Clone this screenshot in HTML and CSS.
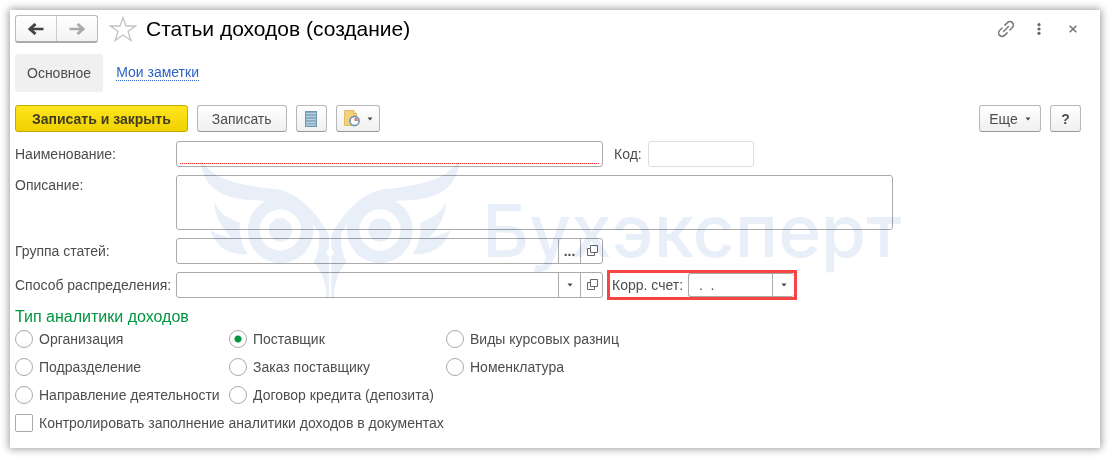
FILE: index.html
```html
<!DOCTYPE html>
<html lang="ru">
<head>
<meta charset="utf-8">
<title>Статьи доходов (создание)</title>
<link rel="stylesheet" href="styles.css">
</head>
<body>
<svg class="defs" aria-hidden="true">
  <symbol id="open" viewBox="0 0 12 12"><path d="M4.500.500h7v7h-7zM4.500 3.500h-3v7h7v-3" fill="none" stroke="#666"/></symbol>
  <symbol id="caret" viewBox="0 0 6 4"><path d="M.500.500h5L3 3.500z" fill="#444"/></symbol>
</svg>
<main class="window">
  <header class="titlebar">
    <div class="history">
      <button type="button" aria-label="Назад"><svg width="16" height="12" viewBox="0 0 16 12"><path d="M15.500 6H4" stroke="#444" stroke-width="2.500"/><path d="M7.500 1 2 6l5.500 5" fill="none" stroke="#444" stroke-width="3"/></svg></button>
      <button type="button" aria-label="Вперед"><svg width="16" height="12" viewBox="0 0 16 12"><path d="M.5 6H12" stroke="#aaa" stroke-width="2.500"/><path d="M8.500 1 14 6l-5.500 5" fill="none" stroke="#aaa" stroke-width="3"/></svg></button>
    </div>
    <button class="plain" type="button" aria-label="В избранное"><svg width="28" height="26" viewBox="0 0 28 26"><path d="M14 1.500 17 10h9.500l-7.500 5.500 3 9-8-5.500-8 5.500 3-9L1.500 10H11z" fill="#fff" stroke="#bfc3c8" stroke-width="1.300"/></svg></button>
    <h1>Статьи доходов (создание)</h1>
    <div class="window-actions">
      <button class="plain" type="button" aria-label="Ссылка"><svg width="18" height="18" viewBox="0 0 18 18"><g transform="rotate(-45 9 9)" fill="none" stroke="#777" stroke-width="1.500" stroke-linecap="round"><path d="M7 5.500H3.500a3.500 3.500 0 0 0 0 7H7M11 5.500h3.500a3.500 3.500 0 0 1 0 7H11M5.500 9h7"/></g></svg></button>
      <button class="plain" type="button" aria-label="Меню"><svg width="4" height="12" viewBox="0 0 4 12" fill="#666"><circle cx="2" cy="1.700" r="1.600"/><circle cx="2" cy="6" r="1.600"/><circle cx="2" cy="10.300" r="1.600"/></svg></button>
      <button class="plain close" type="button" aria-label="Закрыть"><svg width="8" height="8" viewBox="0 0 8 8"><path d="m.7.700 6.600 6.600M7.300.700.700 7.300" stroke="#777" stroke-width="1.600"/></svg></button>
    </div>
  </header>

  <nav class="tabs">
    <span class="tab">Основное</span>
    <a href="#notes">Мои заметки</a>
  </nav>

  <div class="toolbar">
    <button class="btn primary" type="button">Записать и закрыть</button>
    <button class="btn" type="button">Записать</button>
    <button class="btn icon" type="button" aria-label="Список"><svg width="12" height="16" viewBox="0 0 12 16"><path fill="#7fa3bd" d="M0 0h12v16H0z"/><path d="M1 2.500h10M1 5.500h10M1 8.500h10M1 11.500h10M1 14h10" stroke="#b4cfe0" stroke-width="1.500"/><path d="M.5.500h11v15H.5z" fill="none" stroke="#6f97b3"/></svg></button>
    <button class="btn drop" type="button" aria-label="Создать на основании"><svg width="18" height="17" viewBox="0 0 18 17"><path d="M1.500.500h9l3 3v12h-12z" fill="#f2d27a" stroke="#e0be68"/><path d="M10.500.500v3h3" fill="#fff2c4" stroke="#d9b55c"/><circle cx="11.500" cy="11" r="4.600" fill="#fff" stroke="#6f93b3" stroke-width="1.600"/><path d="M11.500 11V7.500a3.500 3.500 0 0 1 3.500 3.500z" fill="#ef7777"/></svg><svg width="6" height="4"><use href="#caret"/></svg></button>
    <button class="btn more" type="button">Еще <svg width="6" height="4"><use href="#caret"/></svg></button>
    <button class="btn icon help" type="button">?</button>
  </div>

  <form class="form">
    <label for="name">Наименование:</label>
    <div class="line">
      <div class="field wide required"><input id="name" type="text"></div>
      <label for="code">Код:</label>
      <div class="field code"><input id="code" type="text" readonly></div>
    </div>
    <label class="top" for="about">Описание:</label>
    <textarea id="about"></textarea>
    <label for="group">Группа статей:</label>
    <div class="line">
      <div class="field wide"><input id="group" type="text"><button class="dots" type="button">...</button><button type="button" aria-label="Открыть группу"><svg width="12" height="12"><use href="#open"/></svg></button></div>
    </div>
    <label for="method">Способ распределения:</label>
    <div class="line">
      <div class="field wide"><input id="method" type="text"><button type="button" aria-label="Выбрать способ"><svg width="6" height="4"><use href="#caret"/></svg></button><button type="button" aria-label="Открыть способ"><svg width="12" height="12"><use href="#open"/></svg></button></div>
      <div class="marked">
        <label for="account">Корр. счет:</label>
        <div class="field account"><input id="account" type="text" value=" .  ."><button type="button" aria-label="Выбрать счет"><svg width="6" height="4"><use href="#caret"/></svg></button></div>
      </div>
    </div>
  </form>

  <fieldset class="kinds">
    <legend>Тип аналитики доходов</legend>
    <div class="options">
      <label><input type="radio" name="kind">Организация</label>
      <label><input type="radio" name="kind" checked>Поставщик</label>
      <label><input type="radio" name="kind">Виды курсовых разниц</label>
      <label><input type="radio" name="kind">Подразделение</label>
      <label><input type="radio" name="kind">Заказ поставщику</label>
      <label><input type="radio" name="kind">Номенклатура</label>
      <label><input type="radio" name="kind">Направление деятельности</label>
      <label><input type="radio" name="kind">Договор кредита (депозита)</label>
    </div>
  </fieldset>
  <label class="check"><input type="checkbox">Контролировать заполнение аналитики доходов в документах</label>

  <div class="watermark">
    <svg width="260" height="140" viewBox="58 56 780 420">
      <defs>
        <g id="half">
          <path d="M60 58C100 122 190 137 290 147C355 160 410 218 445 285V326A12 12 0 0 0 445 348V473H438C436 430 425 395 399 364C412 345 417 315 416 279L397 252L398 269A98.500 98.500 0 1 1 255 182C200 178 150 180 110 152C80 132 62 100 60 58ZM299 207A62 62 0 1 0 299 331A62 62 0 1 0 299 207Z"/>
          <circle cx="299" cy="269" r="35"/>
          <path d="M101 185C118 222 145 235 178 247C174 282 183 315 202 342C145 346 105 320 88 270C110 283 130 289 153 293C120 260 102 225 101 185Z"/>
        </g>
      </defs>
      <use href="#half"/>
      <use href="#half" transform="translate(897 0) scale(-1 1)"/>
    </svg>
    <span>Бухэксперт</span>
  </div>
</main>
</body>
</html>
```
FILE: styles.css
```css
* { box-sizing: border-box; }

body {
  margin: 0;
  padding: 10px;
  background: #fff;
  color: #4d4d4d;
  font: 14px/20px "Liberation Sans", Arial, sans-serif;
}

button, input, textarea { font: inherit; color: inherit; }
button { padding: 0; display: flex; align-items: center; justify-content: center; }
.defs { position: absolute; width: 0; height: 0; }

.window {
  position: relative;
  padding: 5px 11px 15px 5px;
  background: #fff;
  box-shadow: 0 0 8px 1px rgba(0, 0, 0, .4);
}

.titlebar { display: flex; align-items: center; height: 28px; }
.history {
  display: flex;
  width: 83px;
  height: 28px;
  margin-right: 11px;
  border: 1px solid #bbb;
  border-bottom: 2px solid #aaa;
  border-radius: 3px;
  background: linear-gradient(#fff, #f3f3f3);
}
.history button { flex: 1; border: 0; background: none; }
.history button + button { border-left: 1px solid #ccc; }
.plain { border: 0; background: none; }
h1 { margin: 0 0 0 9px; font-size: 21px; font-weight: 400; line-height: 28px; color: #000; }
.window-actions { display: flex; align-items: center; gap: 22px; margin-left: auto; padding-right: 12px; }
.close { margin-left: 6px; }

.tabs { display: flex; align-items: center; gap: 13px; margin-top: 11px; }
.tab { padding: 9px 12px; border-radius: 3px; background: #f0f0f0; }
.tabs a { color: #2e62c4; line-height: 15px; text-decoration: none; border-bottom: 1px dotted #2e62c4; }

.toolbar { display: flex; gap: 9px; margin-top: 13px; padding-right: 8px; }
.btn {
  height: 27px;
  padding: 0 14px;
  border: 1px solid #b8b8b8;
  border-bottom-color: #999;
  border-radius: 3px;
  background: linear-gradient(#fff, #f0f0f0);
}
.primary {
  padding: 0 16px;
  border-color: #c4ab00;
  background: linear-gradient(#ffe51f, #f0d200);
  font-weight: 700;
  color: #403c20;
}
.icon { width: 31px; padding: 0; }
.drop { width: 44px; padding: 0; gap: 6px; }
.more { gap: 7px; width: 62px; padding: 0; margin-left: auto; }
.help { font-weight: 700; }

.form {
  display: grid;
  grid-template-columns: 161px minmax(0, 717px);
  align-items: center;
  row-gap: 8px;
  margin-top: 9px;
}
.top { align-self: start; }
.line { display: flex; align-items: center; height: 26px; white-space: nowrap; }
.line > label { margin: 0 6px 0 11px; }
.field {
  display: flex;
  height: 26px;
  border: 1px solid #aaa;
  border-radius: 3px;
  background: #fff;
}
.field input { flex: 1; min-width: 0; padding: 0 6px; border: 0; background: none; outline: 0; }
.field button { width: 22px; border: 0; border-left: 1px solid #aaa; background: none; }
.wide { flex: 0 1 427px; }
.required { padding: 0 3px 2px; }
.field.required input {
  background: repeating-linear-gradient(90deg, #f33 0 1px, #fbb 1px 2px) bottom / 100% 1px no-repeat;
}
.code { width: 106px; border-color: #ddd; }
.field .dots { font-weight: 700; }
textarea {
  display: block;
  width: 100%;
  height: 55px;
  border: 1px solid #aaa;
  border-radius: 3px;
  resize: none;
}
.marked {
  display: flex;
  align-items: center;
  gap: 5px;
  margin-left: 4px;
  padding-left: 2px;
  border: 3px solid #f94444;
}
.account { width: 106px; height: 24px; border-right: 0; }
.account input { white-space: pre; }

.kinds { margin: 9px 0 0; padding: 0; border: 0; }
legend { padding: 0; font-size: 16px; color: #00963f; }
.options {
  display: grid;
  grid-template-columns: 214px 217px auto;
  justify-content: start;
  row-gap: 8px;
  margin-top: 2px;
}
.options label, .check { display: flex; align-items: center; gap: 6px; height: 20px; white-space: nowrap; }
.check { margin-top: 8px; }
.options input, .check input {
  appearance: none;
  flex: none;
  width: 18px;
  height: 18px;
  margin: 0;
  border: 1px solid #aaa;
  background: #fff;
}
.options input { border-radius: 50%; }
.options input:checked { background: radial-gradient(circle, #00963f 3px, #fff 4px); }
.check input { border-radius: 2px; }

.watermark {
  position: absolute;
  left: 190px;
  top: 149px;
  display: flex;
  gap: 22px;
  color: #e8eff8;
  fill: #e8eff8;
  mix-blend-mode: multiply;
  pointer-events: none;
}
.watermark span { padding-top: 32px; font: 500 73px/80px Inter, sans-serif; }
```
